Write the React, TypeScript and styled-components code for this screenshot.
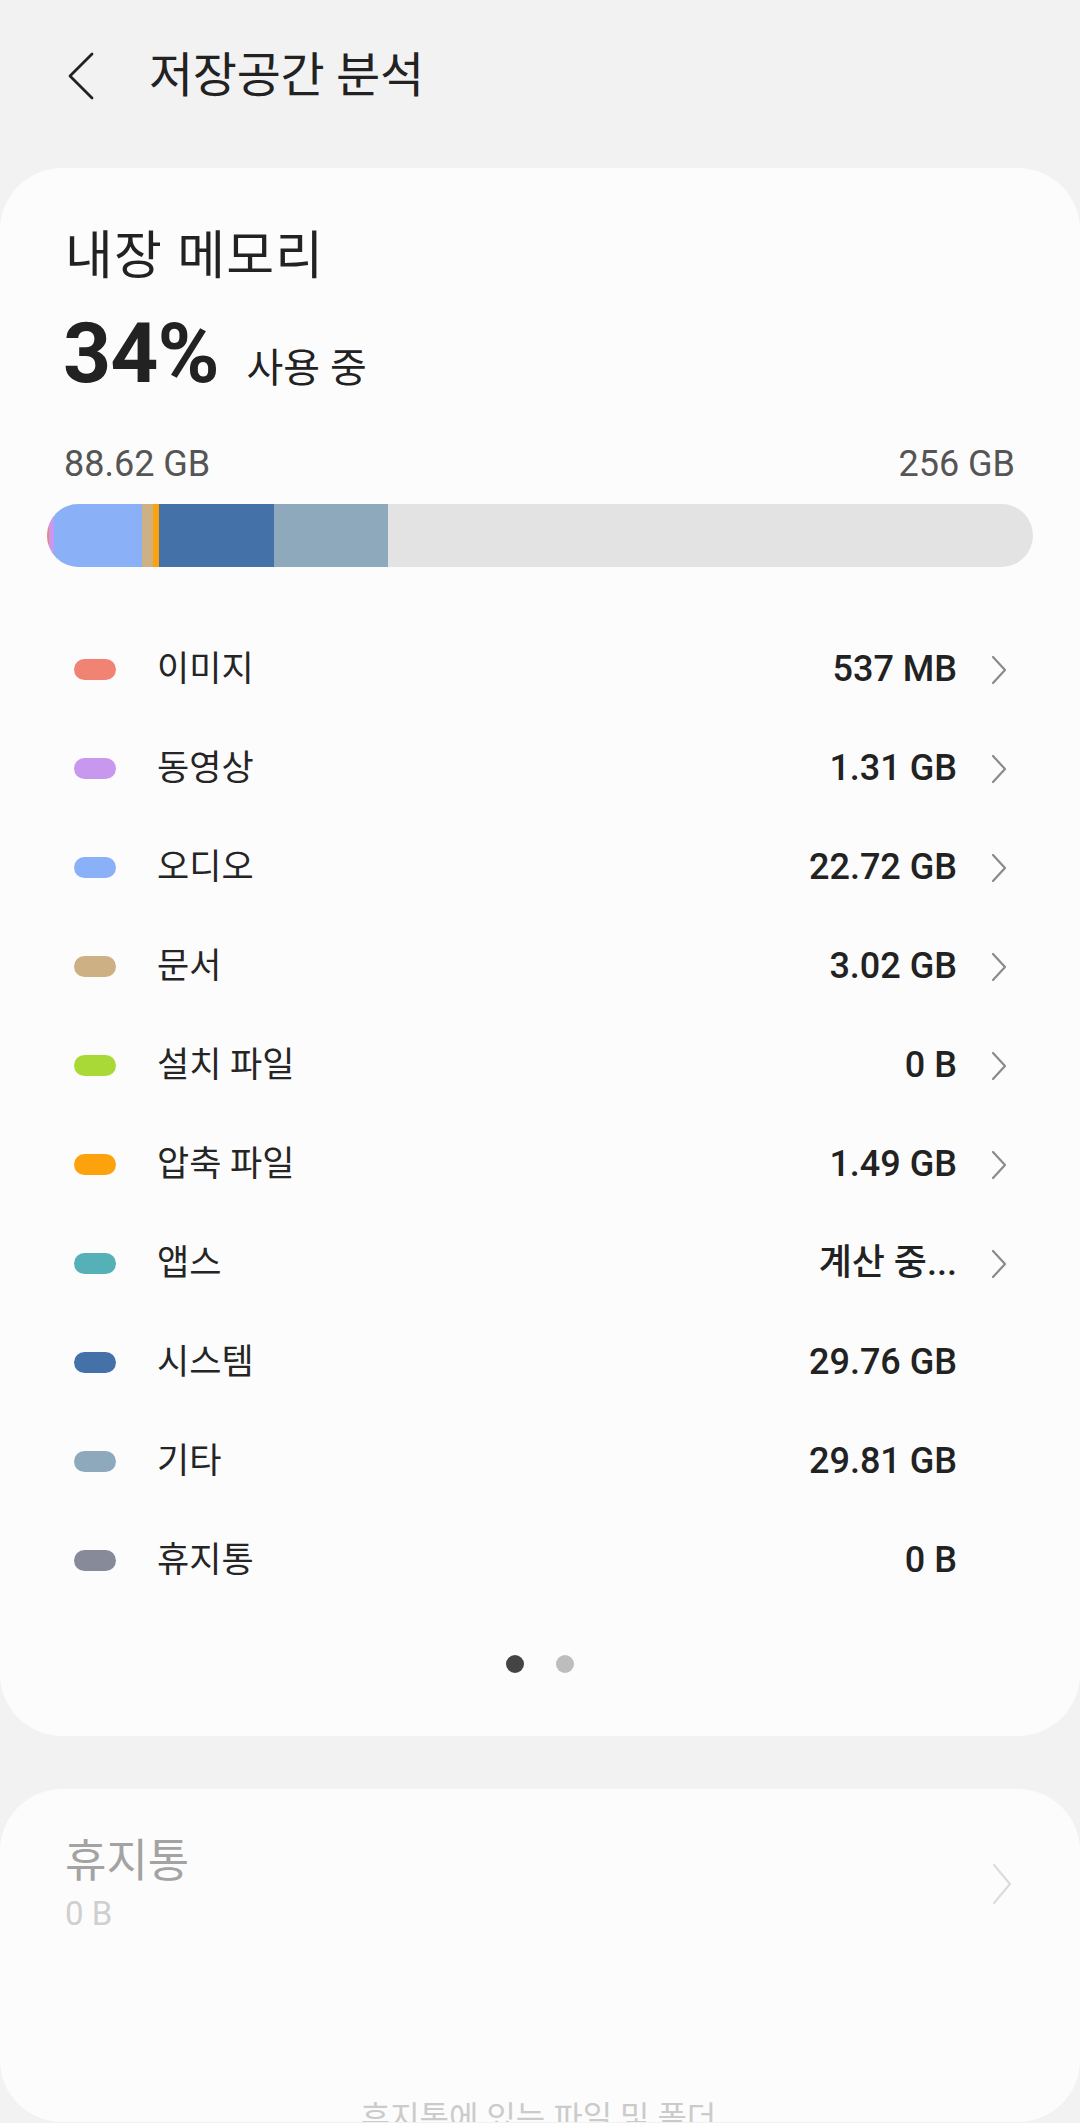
import React from 'react';
import styled, { createGlobalStyle } from 'styled-components';

const GlobalStyle = createGlobalStyle`
  html, body {
    margin: 0;
    padding: 0;
    background: #f2f2f2;
  }
  body {
    font-family: Roboto, "Noto Sans CJK KR", sans-serif;
    color: #222;
    overflow: hidden;
  }
  * {
    box-sizing: border-box;
  }
`;

const TOTAL_GB = 256;

type Category = {
  name: string;
  value: string;
  color: string;
  gb: number;
  link: boolean;
};

const categories: Category[] = [
  { name: '이미지', value: '537 MB', color: '#f08373', gb: 0.537, link: true },
  { name: '동영상', value: '1.31 GB', color: '#c898ef', gb: 1.31, link: true },
  { name: '오디오', value: '22.72 GB', color: '#8ab0f7', gb: 22.72, link: true },
  { name: '문서', value: '3.02 GB', color: '#cdb083', gb: 3.02, link: true },
  { name: '설치 파일', value: '0 B', color: '#a9d937', gb: 0, link: true },
  { name: '압축 파일', value: '1.49 GB', color: '#fca20c', gb: 1.49, link: true },
  { name: '앱스', value: '계산 중...', color: '#55b0b7', gb: 0, link: true },
  { name: '시스템', value: '29.76 GB', color: '#4472a8', gb: 29.76, link: false },
  { name: '기타', value: '29.81 GB', color: '#8fa9bc', gb: 29.81, link: false },
  { name: '휴지통', value: '0 B', color: '#878a98', gb: 0, link: false },
];

const Page = styled.div`
  width: 1080px;
  height: 2123px;
  display: flex;
  flex-direction: column;
`;

const Header = styled.header`
  height: 168px;
  padding: 0 0 16px 67px;
  display: flex;
  align-items: center;
`;

const BackButton = styled.div`
  width: 28px;
  height: 50px;
  display: flex;
  align-items: center;
`;

const Title = styled.h1`
  margin: 0 0 0 54px;
  font-size: 48px;
  line-height: 1.2;
  font-weight: 400;
  letter-spacing: -0.3px;
  color: #222;
`;

const Card = styled.section`
  background: #fcfcfc;
  border-radius: 62px;
  padding: 59px 47px 63px;
  display: flex;
  flex-direction: column;
`;

const CardTitle = styled.div`
  padding-left: 18px;
  font-size: 52px;
  line-height: 60px;
  letter-spacing: 1.2px;
  color: #222;
`;

const UsageRow = styled.div`
  margin-top: 25px;
  padding-left: 16px;
  display: flex;
  align-items: baseline;
`;

const Percent = styled.span`
  font-size: 84px;
  line-height: 1;
  font-weight: 700;
  letter-spacing: -1px;
  color: #222;
`;

const UsageLabel = styled.span`
  margin-left: 28px;
  font-size: 40px;
  line-height: 1.2;
  color: #222;
`;

const SizeRow = styled.div`
  margin-top: 47px;
  padding: 0 18px 0 17px;
  display: flex;
  justify-content: space-between;
  font-size: 36px;
  line-height: 1.2;
  color: #555;
`;

const Bar = styled.div`
  margin-top: 18px;
  height: 63px;
  border-radius: 32px;
  background: #e3e3e3;
  overflow: hidden;
  display: flex;
`;

const Segment = styled.div<{ $color: string }>`
  height: 100%;
  flex-shrink: 0;
  background: ${(p) => p.$color};
`;

const List = styled.div`
  margin-top: 53px;
  display: flex;
  flex-direction: column;
`;

const Row = styled.div`
  height: 99px;
  padding: 0 26px 0 27px;
  display: flex;
  align-items: center;
`;

const Pill = styled.span<{ $color: string }>`
  width: 42px;
  height: 21px;
  border-radius: 11px;
  background: ${(p) => p.$color};
  flex-shrink: 0;
`;

const Label = styled.span`
  margin-left: 41px;
  flex: 1;
  font-size: 35px;
  line-height: 1.2;
  color: #252525;
`;

const Value = styled.span`
  font-size: 36px;
  line-height: 1.2;
  font-weight: 500;
  color: #222;
`;

const ChevronSlot = styled.span<{ $hidden?: boolean }>`
  width: 16px;
  height: 30px;
  margin-left: 34px;
  display: flex;
  align-items: center;
  visibility: ${(p) => (p.$hidden ? 'hidden' : 'visible')};
`;

const Dots = styled.div`
  margin-top: 45px;
  display: flex;
  justify-content: center;
  gap: 32px;
`;

const Dot = styled.span<{ $active?: boolean }>`
  width: 18px;
  height: 18px;
  border-radius: 50%;
  background: ${(p) => (p.$active ? '#444' : '#bdbdbd')};
`;

const TrashCard = styled.section`
  margin-top: 53px;
  height: 333px;
  background: #fcfcfc;
  border-radius: 62px;
  overflow: hidden;
  padding: 46px 68px 0 65px;
  display: flex;
  flex-direction: column;
`;

const TrashHead = styled.div`
  display: flex;
  align-items: center;
`;

const TrashText = styled.div`
  flex: 1;
  display: flex;
  flex-direction: column;
`;

const TrashTitle = styled.span`
  font-size: 45px;
  line-height: 1.2;
  color: #a3a3a3;
`;

const TrashSize = styled.span`
  margin-top: 5px;
  font-size: 33px;
  line-height: 1.2;
  color: #cfcfcf;
`;

const TrashNote = styled.div`
  margin-top: 165px;
  text-align: center;
  font-size: 32px;
  line-height: 1.2;
  color: #cbcbcb;
`;

const BackIcon = () => (
  <svg width="28" height="50" viewBox="0 0 28 50" fill="none">
    <path d="M25 3 L3 25 L25 47" stroke="#222" strokeWidth="2.8" strokeLinecap="round" strokeLinejoin="round" />
  </svg>
);

const Chevron = ({ color = '#8a8a8a', w = 16, h = 30 }: { color?: string; w?: number; h?: number }) => (
  <svg width={w} height={h} viewBox={`0 0 ${w} ${h}`} fill="none">
    <path d={`M2 2 L${w - 2} ${h / 2} L2 ${h - 2}`} stroke={color} strokeWidth="2.2" strokeLinecap="round" strokeLinejoin="round" />
  </svg>
);

const App: React.FC = () => {
  // order in which the used space is drawn on the bar
  const barParts = [
    categories[0],
    categories[1],
    categories[2],
    categories[3],
    categories[5],
    categories[7],
    categories[8],
  ];

  return (
    <Page>
      <GlobalStyle />
      <Header>
        <BackButton><BackIcon /></BackButton>
        <Title>저장공간 분석</Title>
      </Header>

      <Card>
        <CardTitle>내장 메모리</CardTitle>
        <UsageRow>
          <Percent>34%</Percent>
          <UsageLabel>사용 중</UsageLabel>
        </UsageRow>
        <SizeRow>
          <span>88.62 GB</span>
          <span>256 GB</span>
        </SizeRow>
        <Bar>
          {barParts.map((c) => (
            <Segment key={c.name} $color={c.color} style={{ width: `${(c.gb / TOTAL_GB) * 100}%` }} />
          ))}
        </Bar>
        <List>
          {categories.map((c) => (
            <Row key={c.name}>
              <Pill $color={c.color} />
              <Label>{c.name}</Label>
              <Value>{c.value}</Value>
              <ChevronSlot $hidden={!c.link}><Chevron /></ChevronSlot>
            </Row>
          ))}
        </List>
        <Dots>
          <Dot $active />
          <Dot />
        </Dots>
      </Card>

      <TrashCard>
        <TrashHead>
          <TrashText>
            <TrashTitle>휴지통</TrashTitle>
            <TrashSize>0 B</TrashSize>
          </TrashText>
          <Chevron color="#dcdcdc" w={20} h={42} />
        </TrashHead>
        <TrashNote>휴지통에 있는 파일 및 폴더</TrashNote>
      </TrashCard>
    </Page>
  );
};

export default App;
